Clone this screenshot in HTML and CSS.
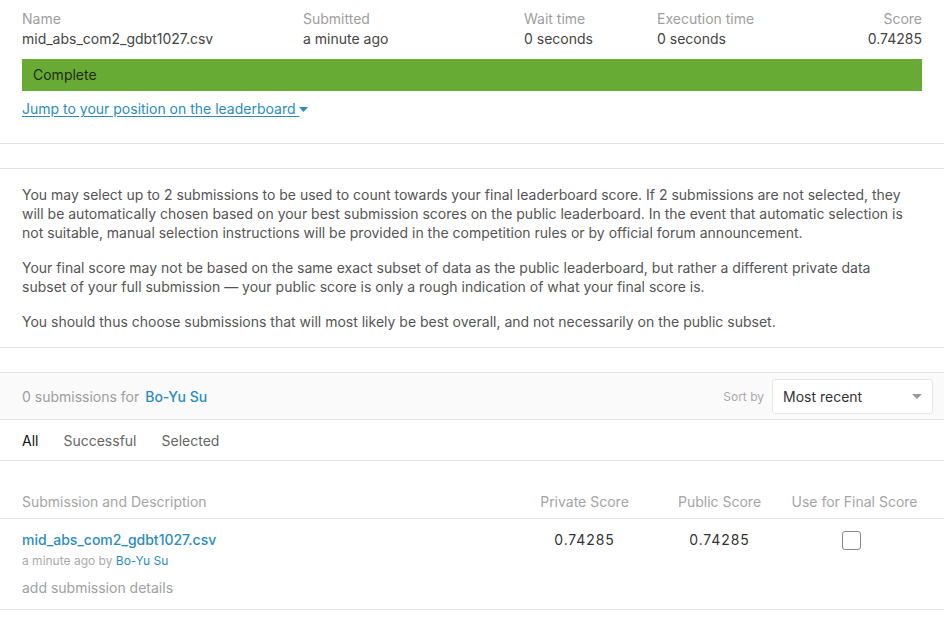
FILE: index.html
```html
<!DOCTYPE html>
<html>
<head>
<meta charset="utf-8">
<link rel="stylesheet" href="styles.css">
</head>
<body>
<section class="summary">
  <div class="meta">
    <div class="cell"><div class="label">Name</div><div class="value">mid_abs_com2_gdbt1027.csv</div></div>
    <div class="cell"><div class="label">Submitted</div><div class="value">a minute ago</div></div>
    <div class="cell"><div class="label">Wait time</div><div class="value">0 seconds</div></div>
    <div class="cell"><div class="label">Execution time</div><div class="value">0 seconds</div></div>
    <div class="cell right"><div class="label">Score</div><div class="value">0.74285</div></div>
  </div>
  <div class="status">Complete</div>
  <a class="jump" href="#">Jump to your position on the leaderboard&nbsp;<svg class="caret" width="9" height="5" viewBox="0 0 9 5"><path d="M0 0H9L4.5 5Z" fill="#2a8cc0"/></svg></a>
</section>
<div class="spacer"></div>
<section class="info">
  <p>You may select up to 2 submissions to be used to count towards your final leaderboard score. If 2 submissions are not selected, they<br>will be automatically chosen based on your best submission scores on the public leaderboard. In the event that automatic selection is<br>not suitable, manual selection instructions will be provided in the competition rules or by official forum announcement.</p>
  <p>Your final score may not be based on the same exact subset of data as the public leaderboard, but rather a different private data<br>subset of your full submission — your public score is only a rough indication of what your final score is.</p>
  <p>You should thus choose submissions that will most likely be best overall, and not necessarily on the public subset.</p>
</section>
<div class="spacer"></div>
<section class="subs-head">
  <div class="count">0 submissions for <a href="#" class="user">Bo-Yu Su</a></div>
  <div class="sort">
    <span class="sort-label">Sort by</span>
    <div class="select"><span>Most recent</span><svg width="10" height="5" viewBox="0 0 10 5"><path d="M0 0H10L5 5Z" fill="#9a9a9a"/></svg></div>
  </div>
</section>
<nav class="tabs">
  <span class="tab active">All</span>
  <span class="tab">Successful</span>
  <span class="tab">Selected</span>
</nav>
<section class="table">
  <div class="thead">
    <div class="th left">Submission and Description</div>
    <div class="th">Private Score</div>
    <div class="th">Public Score</div>
    <div class="th">Use for Final Score</div>
  </div>
  <div class="row">
    <div class="desc">
      <a href="#" class="file">mid_abs_com2_gdbt1027.csv</a>
      <div class="by">a minute ago by <a href="#" class="user-sm">Bo-Yu Su</a></div>
      <div class="details">add submission details</div>
    </div>
    <div class="score">0.74285</div>
    <div class="score">0.74285</div>
    <div class="score"><span class="checkbox"></span></div>
  </div>
</section>
</body>
</html>
```

FILE: styles.css
```css
* { box-sizing: border-box; }
body {
  margin: 0;
  background: #fff;
  font-family: Inter, "Noto Sans", sans-serif;
  font-size: 14px;
  color: #444;
}
a { text-decoration: none; }

.summary {
  padding: 9px 22px 24px;
  border-bottom: 1px solid #e2e2e2;
}
.meta {
  display: grid;
  grid-template-columns: 281px 221px 133px 1fr auto;
}
.label { color: #9e9e9e; line-height: 20px; }
.value { color: #444; line-height: 20px; }
.right { text-align: right; }

.status {
  margin-top: 10px;
  height: 32px;
  line-height: 32px;
  padding-left: 11px;
  background: #67ab34;
  color: #1f2a18;
}
.jump {
  display: inline-block;
  margin-top: 8px;
  line-height: 20px;
  color: #2a8cc0;
  text-decoration: underline;
  text-underline-offset: 2px;
}
.caret { vertical-align: middle; position: relative; top: -1px; }

.spacer {
  height: 25px;
  border-bottom: 1px solid #e2e2e2;
}

.info {
  padding: 16px 22px 6px;
  border-bottom: 1px solid #e2e2e2;
}
.info p {
  margin: 0 0 16px;
  line-height: 19px;
  color: #555;
}
.info p:last-child { margin-bottom: 10px; }

.subs-head {
  display: flex;
  align-items: center;
  justify-content: space-between;
  height: 47px;
  padding: 0 11px 0 22px;
  background: #fafafa;
  border-bottom: 1px solid #e2e2e2;
}
.count { color: #9e9e9e; }
.user { color: #2a8cc0; font-weight: 500; margin-left: 2px; }
.sort { display: flex; align-items: center; gap: 8px; }
.sort-label { font-size: 12px; color: #aaa; }
.select {
  width: 161px;
  height: 35px;
  background: #fff;
  border: 1px solid #e6e6e6;
  border-radius: 3px;
  display: flex;
  align-items: center;
  justify-content: space-between;
  padding: 0 10px 0 10px;
  color: #333;
}

.tabs {
  display: flex;
  gap: 25px;
  height: 41px;
  align-items: center;
  padding: 0 22px;
  border-bottom: 1px solid #e2e2e2;
}
.tab { color: #666; }
.tab.active { color: #111; }

.table { margin-top: 25px; }
.thead, .row {
  display: grid;
  grid-template-columns: 1fr 135px 135px 135px;
  padding: 0 22px;
  border-bottom: 1px solid #e6e6e6;
}
.thead { padding-top: 6px; padding-bottom: 6px; }
.th { color: #a5a5a5; line-height: 20px; text-align: center; }
.th.left { text-align: left; }
.row { padding-top: 11px; padding-bottom: 11px; }
.file { color: #2a8cc0; font-weight: 550; line-height: 20px; display: block; }
.by { font-size: 12px; color: #aaa; line-height: 16px; margin-top: 3px; }
.user-sm { color: #2a8cc0; }
.details { color: #a0a0a0; line-height: 20px; margin-top: 9px; }
.score { text-align: center; color: #333; line-height: 20px; letter-spacing: 0.9px; }
.checkbox {
  display: inline-block;
  width: 19px;
  height: 19px;
  border: 1.5px solid #888;
  border-radius: 3px;
  vertical-align: top;
  margin-top: 1px;
  margin-right: 6px;
}
```
